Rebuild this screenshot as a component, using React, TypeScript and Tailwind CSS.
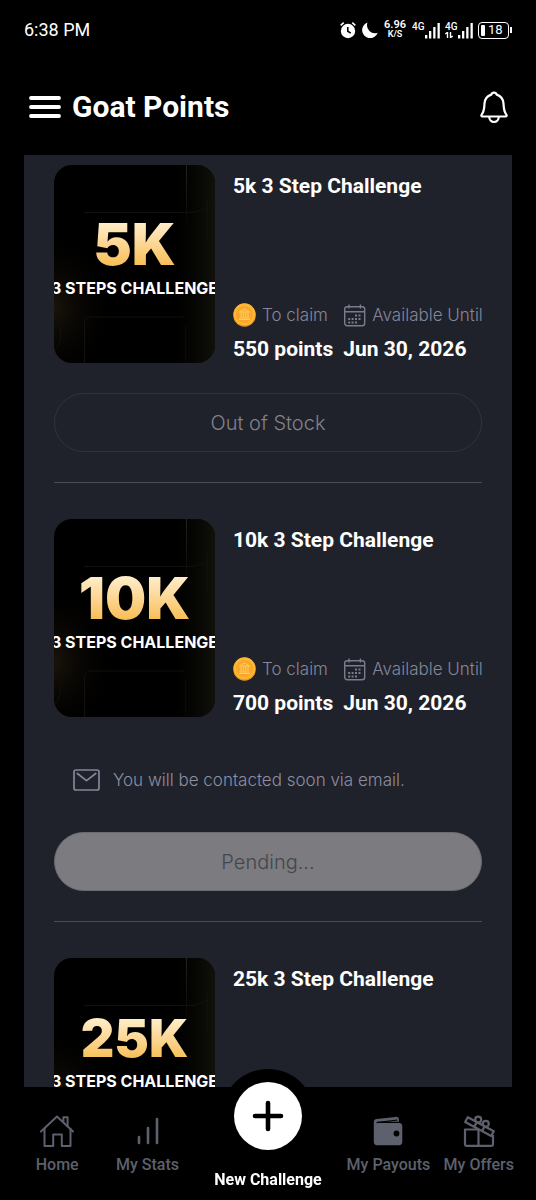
import type { ReactNode } from 'react'

type Offer = {
  size: string
  title: string
  points: number
  until: string
  status: 'out' | 'pending' | 'open'
}

const offers: Offer[] = [
  { size: '5K', title: '5k 3 Step Challenge', points: 550, until: 'Jun 30, 2026', status: 'out' },
  { size: '10K', title: '10k 3 Step Challenge', points: 700, until: 'Jun 30, 2026', status: 'pending' },
  { size: '25K', title: '25k 3 Step Challenge', points: 1500, until: 'Jun 30, 2026', status: 'open' },
]

export default function App() {
  return (
    <div className="flex h-screen flex-col bg-black font-['Roboto',sans-serif] text-white">
      <StatusBar />

      <header className="flex h-[95px] shrink-0 items-center px-7 pb-0.5">
        <button aria-label="Menu" className="mr-2.5">
          <MenuIcon />
        </button>

        <h1 className="flex-1 text-[30px] leading-9 font-bold">Goat Points</h1>

        <button aria-label="Notifications">
          <BellIcon />
        </button>
      </header>

      <main className="mx-6 min-h-0 flex-1 overflow-y-auto bg-[#1f222a] px-[30px] pt-2.5 [scrollbar-width:none]">
        {offers.map((offer) => (
          <OfferCard key={offer.size} offer={offer} />
        ))}
      </main>

      <nav className="relative grid h-[113px] shrink-0 grid-cols-[3fr_3fr_5fr_3fr_3fr] px-3 text-[#5d606d]">
        <NavItem icon={<HomeIcon />} label="Home" />
        <NavItem icon={<StatsIcon />} label="My Stats" />

        <a href="#new" className="relative flex flex-col items-center text-white">
          <span className="-mt-[18px] flex h-[94px] w-[94px] shrink-0 items-center justify-center rounded-full bg-black">
            <span className="flex h-[68px] w-[68px] items-center justify-center rounded-full bg-white">
              <PlusIcon />
            </span>
          </span>
          <span className="mt-[7px] text-base leading-5 font-bold whitespace-nowrap">New Challenge</span>
        </a>

        <NavItem icon={<WalletIcon />} label="My Payouts" />
        <NavItem icon={<GiftIcon />} label="My Offers" />
      </nav>
    </div>
  )
}

function OfferCard({ offer }: { offer: Offer }) {
  return (
    <article className="mb-9 border-b border-[#4b4d54] pb-[30px]">
      <div className="flex gap-[18px]">
        <Poster size={offer.size} />

        <div className="flex min-w-0 flex-1 flex-col justify-between whitespace-nowrap">
          <h2 className="pt-[7px] text-[21px] leading-7 font-bold">{offer.title}</h2>

          <div className="flex gap-2.5">
            <Detail icon={<CoinIcon />} label="To claim" value={`${offer.points} points`} />
            <Detail icon={<CalendarIcon />} label="Available Until" value={offer.until} />
          </div>
        </div>
      </div>

      {offer.status === 'pending' && (
        <p className="mt-[49px] mb-2 flex items-center gap-[13px] pl-[19px] font-['Inter',sans-serif] text-[17px] leading-7 font-light text-[#8d8ea2]">
          <MailIcon />
          You will be contacted soon via email.
        </p>
      )}

      <OfferButton status={offer.status} />
    </article>
  )
}

function Detail({ icon, label, value }: { icon: ReactNode; label: string; value: string }) {
  return (
    <div>
      <p className="mb-1.5 flex items-center gap-1.5 font-['Inter',sans-serif] text-[17px] leading-7 font-light text-[#85869a]">
        {icon}
        {label}
      </p>
      <p className="text-[21px] leading-7 font-bold">{value}</p>
    </div>
  )
}

function OfferButton({ status }: { status: Offer['status'] }) {
  const base = "mt-[30px] h-[59px] w-full rounded-full border font-['Inter',sans-serif] text-xl font-light"

  if (status === 'pending') {
    return (
      <button disabled className={`${base} border-[#6b6c72] bg-[#7b7b80] text-[#45464c]`}>
        Pending...
      </button>
    )
  }

  if (status === 'out') {
    return (
      <button disabled className={`${base} border-[#30333b] text-[#82838a]`}>
        Out of Stock
      </button>
    )
  }

  return <button className={`${base} border-white bg-white text-black`}>Claim</button>
}

function Poster({ size }: { size: string }) {
  return (
    <div className="relative flex h-[198px] w-[161px] shrink-0 flex-col items-center overflow-hidden rounded-[18px] bg-black font-['Inter',sans-serif]">
      <PosterBackdrop />

      <p
        className={`relative bg-gradient-to-b from-[#ffedc8] from-15% to-[#f8bf55] to-85% bg-clip-text font-black text-transparent ${
          size === '25K' ? 'mt-[53px] text-[52px] leading-[56px]' : 'mt-[49px] text-[58px] leading-[60px]'
        }`}
      >
        {size}
      </p>
      <p className="relative mt-0.5 text-base leading-6 font-bold whitespace-nowrap">3 STEPS CHALLENGE</p>
    </div>
  )
}

function PosterBackdrop() {
  return (
    <svg className="absolute inset-0 h-full w-full" viewBox="0 0 161 198" preserveAspectRatio="none" aria-hidden="true">
      <defs>
        <radialGradient id="glow-left" cx="0" cy="0.72" r="0.4">
          <stop offset="0" stopColor="#1a140a" />
          <stop offset="1" stopColor="#000" stopOpacity="0" />
        </radialGradient>
        <linearGradient id="glow-right">
          <stop offset="0.7" stopColor="#000" stopOpacity="0" />
          <stop offset="1" stopColor="#12110b" />
        </linearGradient>
        <linearGradient id="edge-top" x1="0" y1="0" x2="0" y2="1">
          <stop offset="0" stopColor="#25231c" />
          <stop offset="1" stopColor="#060605" />
        </linearGradient>
      </defs>
      <rect width="161" height="198" fill="url(#glow-left)" />
      <rect width="161" height="198" fill="url(#glow-right)" />
      <rect x="132" width="1" height="60" fill="url(#edge-top)" />
      <g fill="none" stroke="#12110d">
        <path d="M30 47.500h98q24 2 32-14M153.500 34v40" />
        <path d="M30.500 198v-40q0-6 6-6H130" />
        <path d="M0 186q9-8 6-24" />
        <path d="M131.500 160v38" stroke="#0a0a08" />
      </g>
    </svg>
  )
}

function NavItem({ icon, label }: { icon: ReactNode; label: string }) {
  return (
    <a href={`#${label}`} className="flex flex-col items-center pt-7">
      <span className="flex h-8 items-center">{icon}</span>
      <span className="mt-2 text-base leading-5 font-medium whitespace-nowrap">{label}</span>
    </a>
  )
}

function StatusBar() {
  return (
    <div className="flex h-[60px] shrink-0 items-center px-6">
      <span className="flex-1 text-lg leading-6">6:38 PM</span>

      <div className="flex items-center">
        <svg width="16" height="18" viewBox="0 0 16 18" aria-hidden="true">
          <circle cx="8" cy="10" r="7.200" fill="#fff" />
          <path d="M7.800 6v4.300l3 1.800" fill="none" stroke="#000" strokeWidth="1.600" />
          <path d="M.7 4.300 3.700 1.600M15.300 4.300l-3-2.700" stroke="#fff" strokeWidth="1.600" />
        </svg>
        <svg className="ml-1.5" width="16" height="16" viewBox="0 0 16 16" aria-hidden="true">
          <path d="M5.500.6a8 8 0 1 0 10.200 10.200A8 8 0 0 1 5.500.6Z" fill="#fff" />
        </svg>

        <div className="ml-1.5 flex w-[22px] flex-col items-center pb-0.5 leading-[10px] font-semibold">
          <span className="text-[11px]">6.96</span>
          <span className="text-[9px] leading-2">K/S</span>
        </div>

        <div className="ml-1.5 flex gap-1">
          <Signal />
          <Signal data />
        </div>

        <div className="ml-1 flex items-center">
          <div className="flex h-[17px] w-[31px] items-center gap-[3px] rounded-[4px] border border-white pl-0.5">
            <span className="h-[11px] w-1 rounded-[1px] bg-white" />
            <span className="text-[13px] leading-4">18</span>
          </div>
          <span className="ml-px h-1.5 w-0.5 bg-white" />
        </div>
      </div>
    </div>
  )
}

function Signal({ data = false }: { data?: boolean }) {
  return (
    <div className="flex">
      <span className="flex w-[13px] flex-col text-[10px] leading-[10px] font-medium">
        4G
        {data && (
          <svg width="8" height="6" viewBox="0 0 8 6" fill="none" stroke="#fff" strokeWidth="1.400" aria-hidden="true">
            <path d="M.3 2 2.500.5V6M5.500 0v5.500L7.700 4" />
          </svg>
        )}
      </span>
      <svg className="-ml-px" width="17" height="17" viewBox="0 0 17 17" fill="#fff" aria-hidden="true">
        <rect x="1" y="13" width="2.300" height="3.500" />
        <rect x="5" y="9" width="2.300" height="7.500" />
        <rect x="9.200" y="5" width="2.300" height="11.500" />
        <rect x="13.500" y="1" width="2.300" height="15.500" />
      </svg>
    </div>
  )
}

function MenuIcon() {
  return (
    <svg width="34" height="24" viewBox="0 0 34 24" stroke="#fff" strokeWidth="3.800" strokeLinecap="round">
      <path d="M3 3h28M3 12h28M3 21h28" />
    </svg>
  )
}

function BellIcon() {
  return (
    <svg width="28" height="34" viewBox="0 0 28 34" fill="none" stroke="#fff" strokeWidth="2.200" strokeLinejoin="round">
      <path d="M11.300 4.600a2.800 2.800 0 0 1 5.400 0c4 1.300 6.600 4.500 6.800 9 .2 5 .8 8.500 2.800 11 .7 1 .3 1.900-.8 1.900h-23c-1.100 0-1.500-.9-.8-1.900 2-2.500 2.600-6 2.800-11 .2-4.500 2.800-7.700 6.800-9Z" />
      <path d="M9.200 26.800a4.800 5.200 0 0 0 9.600 0" />
    </svg>
  )
}

function CoinIcon() {
  return (
    <svg width="23" height="24" viewBox="0 0 23 24" fill="none">
      <ellipse cx="11.500" cy="12" rx="11.300" ry="11.800" fill="#f09a1d" />
      <circle cx="11.500" cy="11.300" r="10.800" fill="#fdb833" />
      <circle cx="11.500" cy="11.500" r="8.600" fill="#f9a72b" />
      <path d="m6.500 9 5-3 5 3ZM8 9.500v5M10.300 9.500v5M12.700 9.500v5M15 9.500v5M6.500 15h10M6 16.500h11" stroke="#ffd56b" strokeWidth=".9" />
    </svg>
  )
}

function CalendarIcon() {
  return (
    <svg width="23" height="23" viewBox="0 0 23 23" fill="none" stroke="#7b7c8c" strokeWidth="1.400">
      <rect x="1.700" y="2.700" width="20" height="19" rx="2.500" />
      <path d="M1.700 7.700h20M6 .5v4M17.400.5v4" />
      <path
        d="M12 11.500h2M15.500 11.500h2M5.200 15h2M8.600 15h2M12 15h2M15.500 15h2M5.200 18.500h2M8.600 18.500h2M12 18.500h2"
        strokeWidth="1.800"
      />
    </svg>
  )
}

function MailIcon() {
  return (
    <svg width="27" height="22" viewBox="0 0 27 22" fill="none" stroke="#85869a" strokeWidth="1.700" strokeLinejoin="round">
      <rect x="1" y="1" width="25" height="20" rx="2" />
      <path d="m4.300 4.500 9.200 7.200 9.200-7.200" strokeLinecap="round" />
    </svg>
  )
}

function HomeIcon() {
  return (
    <svg width="34" height="32" viewBox="0 0 34 32" fill="none" stroke="currentColor" strokeWidth="2" strokeLinejoin="round" strokeLinecap="round">
      <path d="M1 16.500 17 1.500l16 15" />
      <path d="M4.500 13.800V31h8.700V19.500h8.600V31h8.700V13.800" />
      <path d="M23.400 7.200V2.300h4.200v9" />
    </svg>
  )
}

function StatsIcon() {
  return (
    <svg width="24" height="28" viewBox="0 0 24 28" stroke="currentColor" strokeWidth="2.600" strokeLinecap="round">
      <path d="M3 20v6M12 11v15M21 2v24" />
    </svg>
  )
}

function PlusIcon() {
  return (
    <svg width="32" height="32" viewBox="0 0 32 32" stroke="#000" strokeWidth="4.600" strokeLinecap="round">
      <path d="M16 3v26M3 16h26" />
    </svg>
  )
}

function WalletIcon() {
  return (
    <svg width="30" height="30" viewBox="0 0 30 30" fill="currentColor">
      <path d="M.8 5.800C.8 4 2 3.300 3.500 3L22.500.9C24.500.7 26 1.500 26 3.500v2.300H4.500v1.100H26c2 0 3.300 1.200 3.300 3.100v16c0 2-1.300 3.200-3.200 3.200H4c-2 0-3.200-1.200-3.200-3.200Z" />
      <path d="M3.600 6.600 24.600 4" stroke="#000" strokeWidth="1.200" />
      <circle cx="23.500" cy="17.500" r="2.900" fill="#000" />
    </svg>
  )
}

function GiftIcon() {
  return (
    <svg width="32" height="32" viewBox="0 0 32 32" fill="none" stroke="currentColor" strokeWidth="2.200" strokeLinejoin="round">
      <path d="M17 14.500H2v15q0 1.300 1.300 1.300h25.400q1.300 0 1.300-1.300V20M15.500 14.500v16" />
      <circle cx="15.200" cy="4.600" r="3" />
      <circle cx="22.800" cy="8.800" r="3" />
      <path d="M2.200 7 4.800 2.200 30.800 16.200 28.200 21Z" fill="#000" />
      <path d="M13.800 7.200l-2.600 4.700M21.600 11.400l-2.600 4.700" />
    </svg>
  )
}
